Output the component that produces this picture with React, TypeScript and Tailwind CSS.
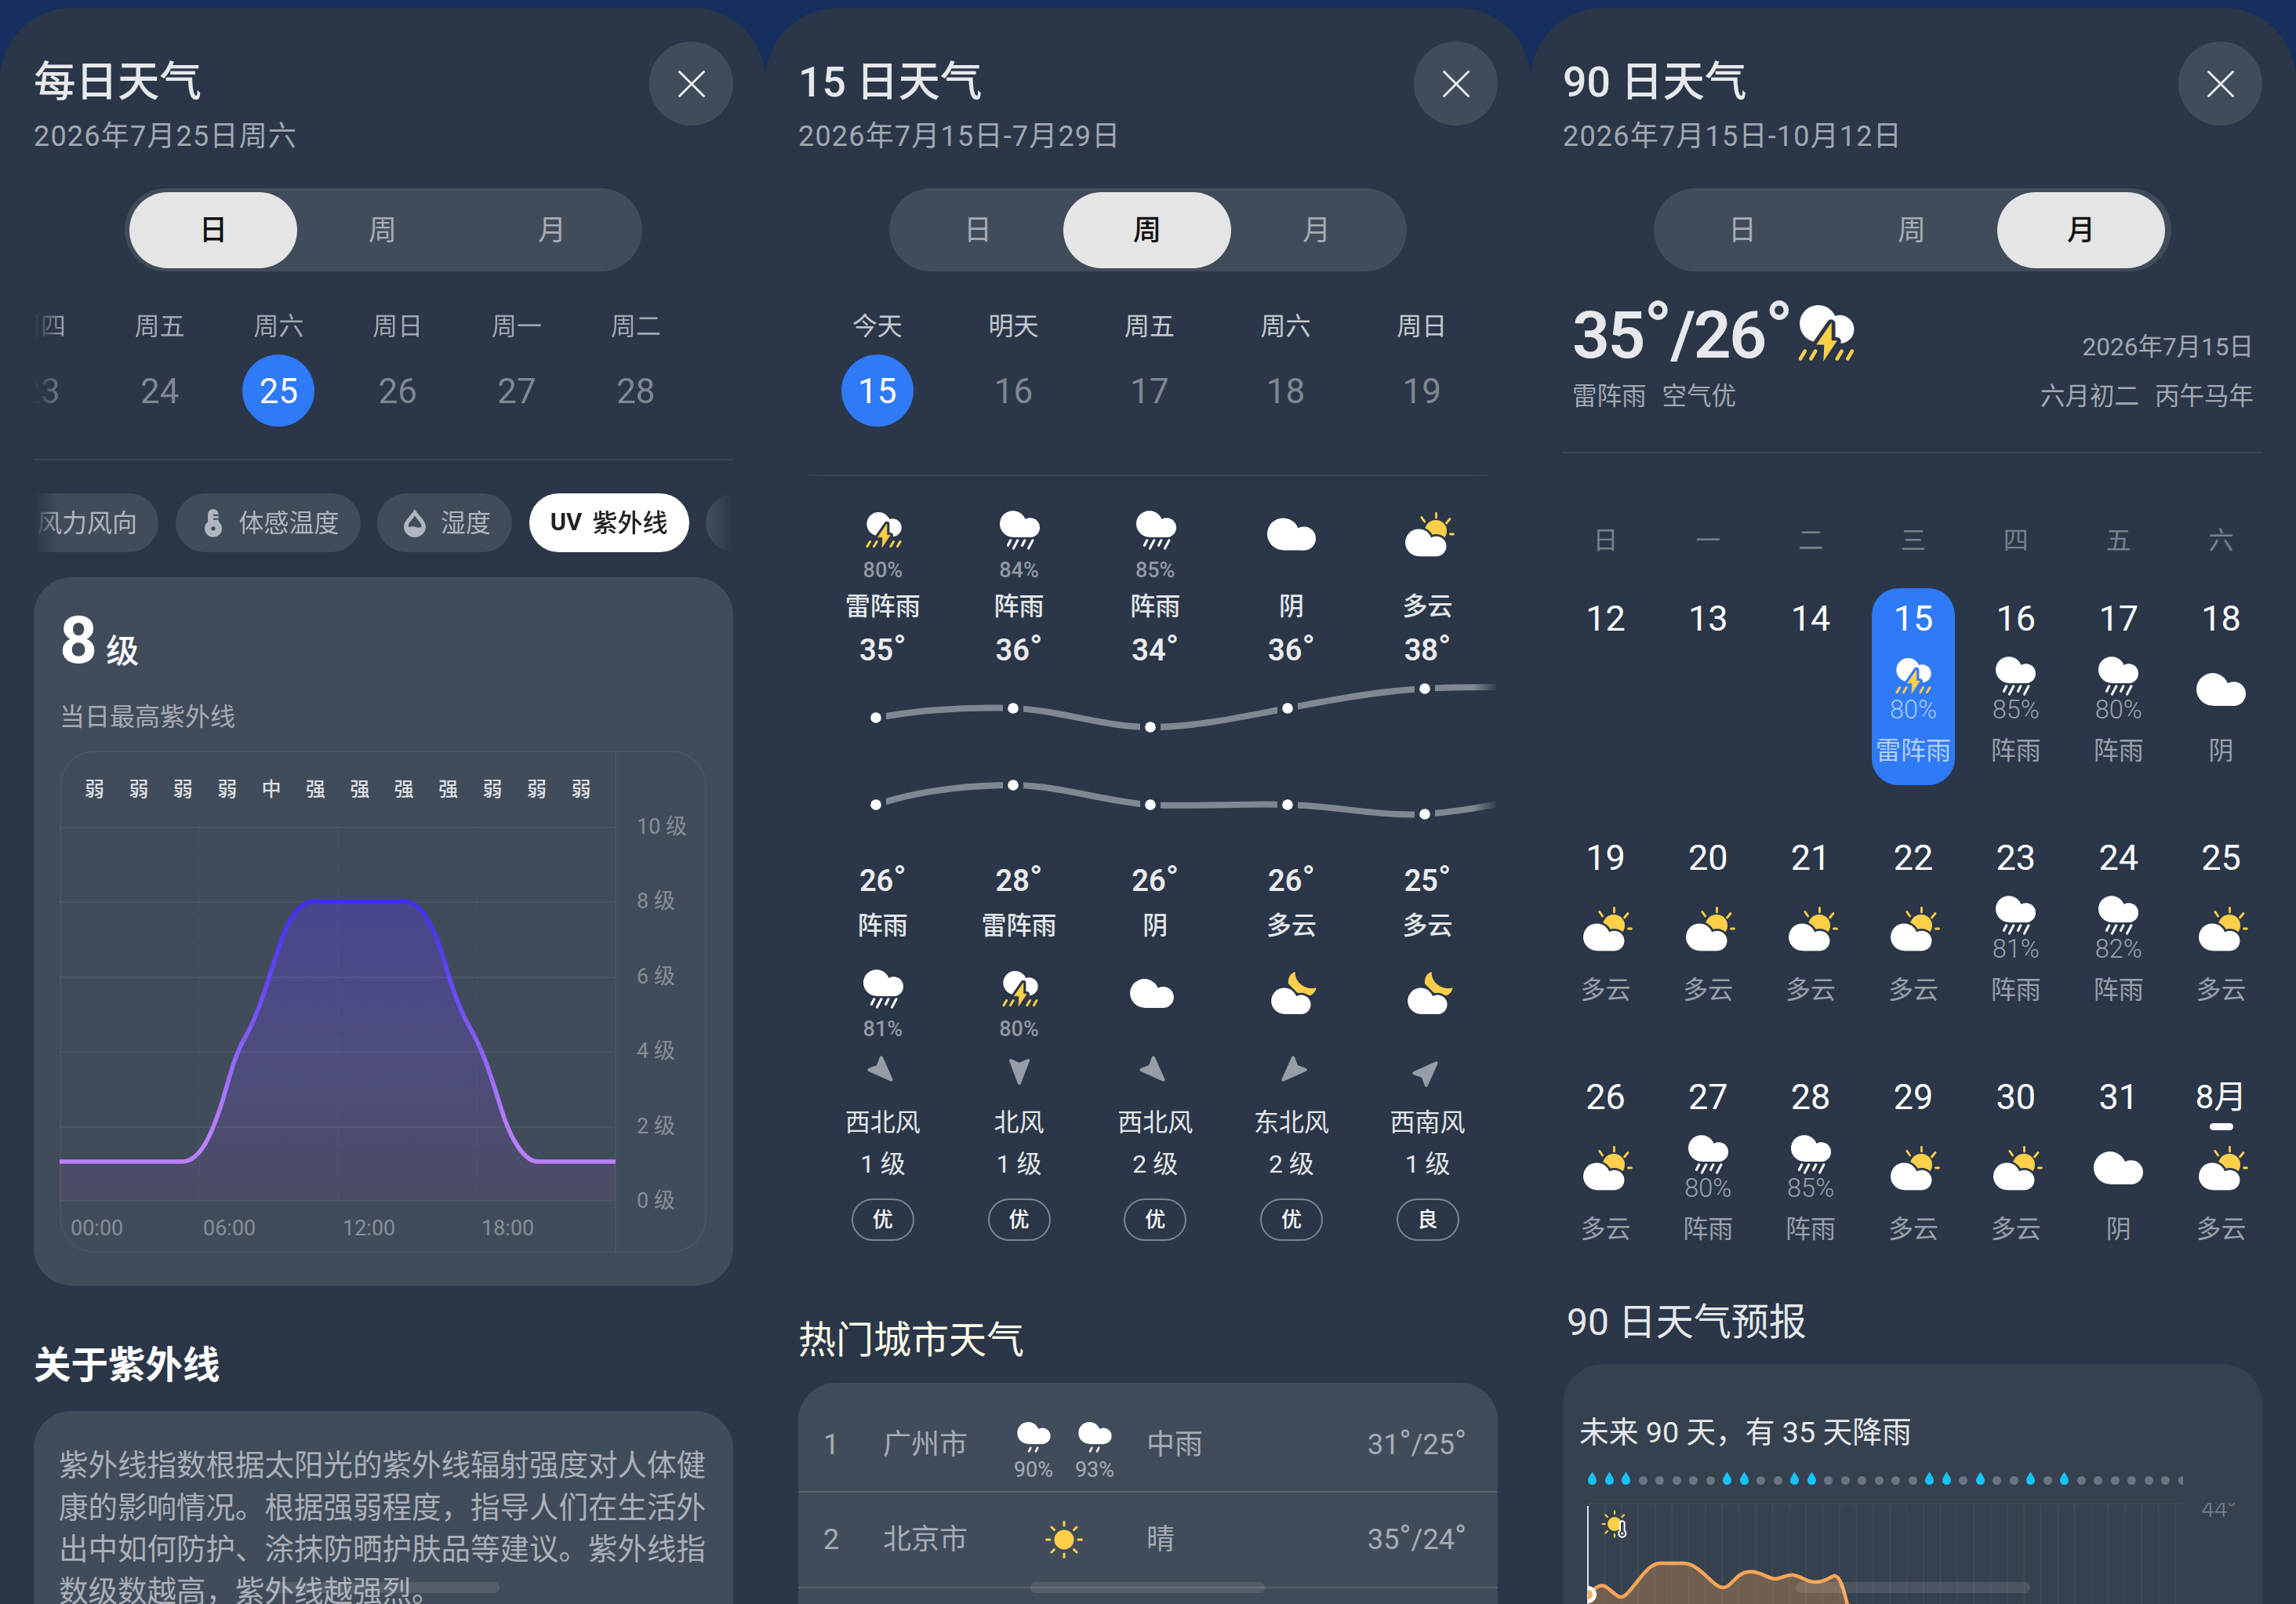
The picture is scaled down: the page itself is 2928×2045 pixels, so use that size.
import clsx from "clsx";
import type { ReactNode } from "react";

type Weather = "thunder" | "rain" | "drizzle" | "cloud" | "partly" | "night" | "sun";

const YELLOW = "#ffcf4a";

const CLOUD = (
  <>
    <circle cx="50" cy="50" r="50" />
    <circle cx="115" cy="64" r="37" />
    <path d="M50 50H115V101H50Z" />
  </>
);

function RainIcon({ className }: { className?: string }) {
  return (
    <svg className={className} viewBox="0 0 152 148" fill="#fff">
      {CLOUD}
      <path
        d="M41 112L31 132M68 112L52 143M95 112L85 132M125 112L109 143"
        stroke="#fff"
        strokeWidth="9"
        strokeLinecap="round"
      />
    </svg>
  );
}

function DrizzleIcon({ className }: { className?: string }) {
  return (
    <svg className={className} viewBox="0 0 152 140" fill="#fff">
      {CLOUD}
      <path d="M61 118L53 134M93 118L85 134" stroke="#fff" strokeWidth="9" strokeLinecap="round" />
    </svg>
  );
}

// currentColor is the surface behind the icon, it cuts the bolt out of the cloud
function ThunderIcon({ className }: { className?: string }) {
  return (
    <svg className={className} viewBox="0 0 140 140">
      <g fill="#fff">
        <circle cx="50" cy="46" r="46" />
        <circle cx="104" cy="60" r="35" />
        <path d="M50 60H104V95H60Z" />
      </g>
      <path
        d="M82 46L46 98L64 100V150L96 90H82Z"
        fill="currentColor"
        stroke="currentColor"
        strokeWidth="21"
        strokeLinejoin="round"
      />
      <path d="M82 46L47 97H66L64 136L95 89H82Z" fill={YELLOW} stroke={YELLOW} strokeWidth="2" />
      <path
        d="M17 114L6 133M43 114L32 133M108 114L97 133M134 114L123 133"
        stroke={YELLOW}
        strokeWidth="9"
        strokeLinecap="round"
      />
    </svg>
  );
}

function CloudIcon({ className }: { className?: string }) {
  return (
    <svg className={className} viewBox="0 0 152 101" fill="#fff">
      {CLOUD}
    </svg>
  );
}

function PartlyIcon({ className }: { className?: string }) {
  return (
    <svg className={className} viewBox="0 0 63 57">
      <circle cx="39" cy="24" r="14" fill={YELLOW} />
      <path
        d="M39.5 1.5V7M20.8 6.5L24.6 12M57 8.5L52.5 14M57.5 28H61.5"
        stroke={YELLOW}
        strokeWidth="2.8"
        strokeLinecap="round"
      />
      <g transform="translate(0 21.5) scale(.345)">
        <g fill="currentColor" stroke="currentColor" strokeWidth="16">
          {CLOUD}
        </g>
        <g fill="#fff">{CLOUD}</g>
      </g>
    </svg>
  );
}

function NightIcon({ className }: { className?: string }) {
  return (
    <svg className={className} viewBox="0 0 174 163">
      <path
        d="M92 0C72 6 64 24 66 46L100 80L150 91C162 86 172 74 173 61C150 68 124 60 107 42C95 28 91 14 92 0Z"
        fill={YELLOW}
      />
      <g transform="translate(0 62)">
        <g fill="currentColor" stroke="currentColor" strokeWidth="16">
          {CLOUD}
        </g>
        <g fill="#fff">{CLOUD}</g>
      </g>
    </svg>
  );
}

function SunIcon({ className }: { className?: string }) {
  return (
    <svg className={className} viewBox="0 0 48 48">
      <circle cx="24" cy="24" r="12.5" fill={YELLOW} />
      <path
        d="M24 1.5V6M24 42V46.5M1.5 24H6M42 24H46.5M8 8L11.5 11.5M36.5 36.5L40 40M40 8L36.5 11.5M11.5 36.5L8 40"
        stroke={YELLOW}
        strokeWidth="3"
        strokeLinecap="round"
      />
    </svg>
  );
}

function WeatherIcon({ type, className }: { type: Weather; className?: string }) {
  if (type === "thunder") return <ThunderIcon className={clsx("h-[46px] w-[46px]", className)} />;
  if (type === "rain") return <RainIcon className={clsx("h-[50px] w-[51px]", className)} />;
  if (type === "drizzle") return <DrizzleIcon className={clsx("h-[39px] w-[43px]", className)} />;
  if (type === "partly") return <PartlyIcon className={clsx("h-[57px] w-[63px]", className)} />;
  if (type === "night") return <NightIcon className={clsx("h-[54px] w-[58px]", className)} />;
  if (type === "sun") return <SunIcon className={clsx("h-12 w-12", className)} />;
  return <CloudIcon className={className ?? "h-[42px] w-[63px]"} />;
}

function ThermometerIcon() {
  return (
    <svg className="h-[36px] w-[22px]" viewBox="0 0 66 107" fill="#b1b6be">
      <path d="M12 19A20 19 0 0 1 53 19V60H12Z" />
      <circle cx="33" cy="74" r="33" />
      <circle cx="33" cy="74" r="8" fill="#414c5b" />
      <path d="M33 23H60M33 38H60" stroke="#414c5b" strokeWidth="6" />
    </svg>
  );
}

function HumidityIcon() {
  return (
    <svg className="h-[36px] w-[28px]" viewBox="0 0 82 105">
      <path d="M41 0C50 20 82 42 82 66A41 39 0 0 1 0 66C0 42 32 20 41 0Z" fill="#b1b6be" />
      <path d="M41 24C48 38 66 50 66 66C56 73 48 68 41 66C34 64 26 64 17 67C15 50 34 38 41 24Z" fill="#414c5b" />
    </svg>
  );
}

function Degree() {
  return <span className="relative -top-[0.05em] text-[1.12em] leading-none">°</span>;
}

const TABS = ["日", "周", "月"];

function Panel({
  title,
  subtitle,
  active,
  className,
  children,
}: {
  title: string;
  subtitle: string;
  active: number;
  className: string;
  children: ReactNode;
}) {
  return (
    <section
      className={clsx(
        "relative flex h-[2035px] w-[976px] flex-col overflow-hidden rounded-t-[92px] bg-[#2b3748] text-[#2b3748]",
        className
      )}
    >
      <header className="flex h-[230px] shrink-0 items-start justify-between">
        <div className="pt-[60px]">
          <h1 className="h-[70px] text-[53.5px] leading-[70px] font-medium text-[#e6e8eb]">{title}</h1>
          <p className="mt-[9px] text-[36px] leading-[50px] tracking-[1.2px] text-[#a1a8b1]">{subtitle}</p>
        </div>
        <button className="mt-[43px] flex h-[107px] w-[107px] items-center justify-center rounded-full bg-[#414c5b]">
          <svg className="h-[34px] w-[34px]" viewBox="0 0 34 34">
            <path d="M1.500 1.500L32.500 32.500M32.500 1.500L1.500 32.500" stroke="#eceef0" strokeWidth="2.8" strokeLinecap="round" />
          </svg>
        </button>
      </header>

      <nav className="ml-[116px] flex h-[106px] w-[660px] shrink-0 items-center gap-[2px] rounded-full bg-[#414c5b] pl-[6px]">
        {TABS.map((tab, i) => (
          <button
            key={tab}
            className={clsx(
              "h-[97px] w-[214px] rounded-full pt-[2px] text-[36px]",
              i === active ? "bg-[#e5e5e5] font-medium text-[#111]" : "text-[#a6acb6]"
            )}
          >
            {tab}
          </button>
        ))}
      </nav>

      {children}

      <div className="absolute bottom-[14px] left-[338px] h-[14px] w-[299px] rounded-full bg-white/10" />
    </section>
  );
}

function DateCell({
  week,
  day,
  active,
  className,
  weekClassName,
}: {
  week: string;
  day: number;
  active?: boolean;
  className: string;
  weekClassName: string;
}) {
  return (
    <div className={clsx("flex shrink-0 flex-col items-center", className)}>
      <span className={clsx("text-[32px] leading-[40px]", weekClassName)}>{week}</span>
      <span
        className={clsx(
          "mt-4 flex h-[92px] w-[92px] items-center justify-center rounded-full pt-px text-[44px]",
          active ? "bg-[#2f7af7] text-white" : "text-[#7f8791]"
        )}
      >
        {day}
      </span>
    </div>
  );
}

/* ---------- 日 ---------- */

const WEEK_DATES = [
  { week: "周四", day: 23 },
  { week: "周五", day: 24 },
  { week: "周六", day: 25, active: true },
  { week: "周日", day: 26 },
  { week: "周一", day: 27 },
  { week: "周二", day: 28 },
];

const UV_LEVELS = ["弱", "弱", "弱", "弱", "中", "强", "强", "强", "强", "弱", "弱", "弱"];
const UV_CURVE =
  "M0 524H156C180 524 194 489 208 446C220 403 226 383 238 363C257 329 268 283 278 256C288 223 302 192 325 192H439C464 192 480 233 491 269C501 305 512 335 526 358C544 391 554 428 563 456C574 493 592 524 610 524H709";

function UvChart() {
  return (
    <svg className="mt-[23px] ml-[33px] h-[640px] w-[826px]" viewBox="0 0 826 640" fill="none">
      <defs>
        <linearGradient id="uv-line" gradientUnits="userSpaceOnUse" x1="0" y1="192" x2="0" y2="500">
          <stop offset="0" stopColor="#402ff0" />
          <stop offset=".45" stopColor="#7350f8" />
          <stop offset=".85" stopColor="#b078f8" />
          <stop offset="1" stopColor="#bb80f8" />
        </linearGradient>
        <linearGradient id="uv-fill" gradientUnits="userSpaceOnUse" x1="0" y1="192" x2="0" y2="574">
          <stop offset="0" stopColor="#4a468f" />
          <stop offset=".5" stopColor="#4d4c7e" />
          <stop offset="1" stopColor="#4b4d63" />
        </linearGradient>
      </defs>
      <path d={`${UV_CURVE}V574H0Z`} fill="url(#uv-fill)" />
      <g stroke="#fff" strokeOpacity=".05" strokeWidth="2">
        <rect x="1" y="1" width="823" height="638" rx="44" />
        <path d="M709 1V639M1 98H709M1 193H709M1 289H709M1 384H709M1 480H709M1 574H709" />
        <path d="M178 98V574M355 98V574M532 98V574" strokeDasharray="28 10" strokeOpacity=".025" />
      </g>
      <path d={UV_CURVE} stroke="url(#uv-line)" strokeWidth="5.5" />
      {UV_LEVELS.map((level, i) => (
        <text key={i} x={44.5 + i * 56.4} y="58" fontSize="25" fontWeight="500" textAnchor="middle" fill="#dcdfe3">
          {level}
        </text>
      ))}
      {[10, 8, 6, 4, 2, 0].map((n, i) => (
        <text key={n} x="736" y={106 + i * 95.4} fontSize="27" fill="#868e99">
          {n} 级
        </text>
      ))}
      <text x="14" y="618" fontSize="27" fill="#868e99">00:00</text>
      <text x="183" y="618" fontSize="27" fill="#868e99">06:00</text>
      <text x="361" y="618" fontSize="27" fill="#868e99">12:00</text>
      <text x="538" y="618" fontSize="27" fill="#868e99">18:00</text>
    </svg>
  );
}

function Chip({ icon, children }: { icon?: ReactNode; children?: ReactNode }) {
  return (
    <div className="flex h-[75px] shrink-0 items-center gap-[17px] rounded-full bg-[#414c5b] pr-[27px] pl-8 text-[32px] text-[#b1b6be]">
      <span className="flex w-8 justify-center">{icon}</span>
      {children}
    </div>
  );
}

function DayPanel() {
  return (
    <Panel title="每日天气" subtitle="2026年7月25日周六" active={0} className="pr-[41px] pl-[43px]">
      <div className="mt-[50px] flex shrink-0 overflow-hidden [mask-image:linear-gradient(90deg,transparent,black_40px)]">
        <div className="-ml-[67px] flex">
          {WEEK_DATES.map((d) => (
            <DateCell key={d.day} {...d} className="w-[151.8px]" weekClassName="text-[#a1a8b1]" />
          ))}
        </div>
      </div>
      <div className="mt-[41px] h-[2px] shrink-0 bg-[#374453]" />

      <div className="mt-[42px] shrink-0 overflow-hidden [mask-image:linear-gradient(90deg,transparent,black_32px,black_862px,transparent)]">
        <div className="-ml-[77px] flex gap-[21.5px]">
          <Chip>风力风向</Chip>
          <Chip icon={<ThermometerIcon />}>体感温度</Chip>
          <Chip icon={<HumidityIcon />}>湿度</Chip>
          <div className="flex h-[75px] w-[204px] shrink-0 items-center justify-center gap-[13px] rounded-full bg-white text-[32px] font-medium whitespace-nowrap text-[#222]">
            <span className="text-[31px] font-bold">UV</span>
            紫外线
          </div>
          <Chip icon={<span className="h-6 w-6 rounded-full border-4 border-[#b1b6be]" />} />
        </div>
      </div>

      <div className="mt-8 h-[903px] shrink-0 rounded-[48px] bg-[#414c5b] pt-[30px]">
        <div className="flex h-[102px] items-center gap-[11px] pl-[33px] text-white">
          <span className="text-[84px] leading-[102px] font-bold">8</span>
          <span className="pt-[27px] text-[42px] leading-[60px] font-medium">级</span>
        </div>
        <p className="mt-[26px] pl-[33px] text-[32px] leading-[40px] text-[#a6acb4]">当日最高紫外线</p>
        <UvChart />
      </div>

      <h2 className="mt-[67px] shrink-0 text-[47.5px] leading-[70px] font-bold text-white">关于紫外线</h2>
      <div className="mt-[23px] shrink-0 rounded-[48px] bg-[#414c5b] px-[32px] pt-[43px] pb-20 text-[37.5px] leading-[53.6px] whitespace-nowrap text-[#aab0b8]">
        <p>紫外线指数根据太阳光的紫外线辐射强度对人体健</p>
        <p>康的影响情况。根据强弱程度，指导人们在生活外</p>
        <p>出中如何防护、涂抹防晒护肤品等建议。紫外线指</p>
        <p>数级数越高，紫外线越强烈。</p>
      </div>
    </Panel>
  );
}

/* ---------- 周 ---------- */

const FIVE_DATES = [
  { week: "今天", day: 15, active: true },
  { week: "明天", day: 16 },
  { week: "周五", day: 17 },
  { week: "周六", day: 18 },
  { week: "周日", day: 19 },
];

type HalfDay = { icon: Weather; percent?: number; text: string; temp: number };

const DAYTIME: HalfDay[] = [
  { icon: "thunder", percent: 80, text: "雷阵雨", temp: 35 },
  { icon: "rain", percent: 84, text: "阵雨", temp: 36 },
  { icon: "rain", percent: 85, text: "阵雨", temp: 34 },
  { icon: "cloud", text: "阴", temp: 36 },
  { icon: "partly", text: "多云", temp: 38 },
];

const NIGHT: (HalfDay & { wind: string; level: number; air: string; rotate: string })[] = [
  { icon: "rain", percent: 81, text: "阵雨", temp: 26, wind: "西北风", level: 1, air: "优", rotate: "-rotate-45" },
  { icon: "thunder", percent: 80, text: "雷阵雨", temp: 28, wind: "北风", level: 1, air: "优", rotate: "rotate-0" },
  { icon: "cloud", text: "阴", temp: 26, wind: "西北风", level: 2, air: "优", rotate: "-rotate-45" },
  { icon: "night", text: "多云", temp: 26, wind: "东北风", level: 2, air: "优", rotate: "rotate-45" },
  { icon: "night", text: "多云", temp: 25, wind: "西南风", level: 1, air: "良", rotate: "rotate-[225deg]" },
];

const DOT_X = [99, 274, 449, 624, 799];
const HIGH_Y = [61, 49, 73, 49, 24];
const LOW_Y = [172, 147, 172, 172, 184];

function TemperatureChart() {
  return (
    <svg className="h-[244px] w-[892px] shrink-0" viewBox="0 0 892 244" fill="none">
      <defs>
        <linearGradient id="temp-line" gradientUnits="userSpaceOnUse" x1="0" y1="0" x2="892" y2="0">
          <stop offset=".965" stopColor="#7f8892" />
          <stop offset="1" stopColor="#7f8892" stopOpacity="0" />
        </linearGradient>
      </defs>
      <g stroke="url(#temp-line)" strokeWidth="8">
        <path d="M99 61C157 51 215 47 274 49C332 51 390 73 449 73C507 73 565 60 624 49C682 38 740 27 799 24C830 22 860 22 892 22" />
        <path d="M99 172C157 153 215 147 274 147C332 147 390 168 449 172C507 175 565 170 624 172C682 173 740 187 799 184C830 182 862 177 892 171" />
      </g>
      {[HIGH_Y, LOW_Y].map((ys) =>
        ys.map((y, i) => (
          <g key={`${DOT_X[i]}-${y}`}>
            <rect x={DOT_X[i] - 13} y={y - 9} width="26" height="18" fill="#2b3748" />
            <circle cx={DOT_X[i]} cy={y} r="6.8" fill="#fff" />
          </g>
        ))
      )}
    </svg>
  );
}

function HalfDayIcon({ icon, percent, small }: { icon: Weather; percent?: number; small?: boolean }) {
  return (
    <>
      <div className={clsx("flex h-16 items-center justify-center", percent ? "pb-[2px]" : "pt-[8px]")}>
        {icon === "cloud" ? (
          <CloudIcon className={small ? "mr-2 h-[37px] w-[56px]" : "h-[42px] w-[62px]"} />
        ) : (
          <WeatherIcon type={icon} className={percent ? "ml-0.5" : "ml-1.5"} />
        )}
      </div>
      <span className="h-[34px] pt-px text-[27px] leading-[34px] font-medium text-[#9299a4]">
        {percent && `${percent}%`}
      </span>
    </>
  );
}

function WeekPanel() {
  return (
    <Panel title="15 日天气" subtitle="2026年7月15日-7月29日" active={1} className="px-[42px]">
      <div className="mt-[50px] ml-[14px] flex shrink-0">
        {FIVE_DATES.map((d) => (
          <DateCell key={d.day} {...d} className="w-[173.6px]" weekClassName="text-[#c5c9cf]" />
        ))}
      </div>
      <div className="mt-[61px] h-[2px] shrink-0 [background-image:linear-gradient(90deg,transparent,#3a4656_4%,#3a4656_96%,transparent)]" />

      <div className="mt-[38px] ml-[21px] flex shrink-0">
        {DAYTIME.map((d, i) => (
          <div key={i} className="flex w-[173.7px] shrink-0 flex-col items-center">
            <HalfDayIcon icon={d.icon} percent={d.percent} />
            <span className="mt-[8px] text-[32px] leading-[44px] font-medium text-[#e4e7eb]">{d.text}</span>
            <span className="mt-[9px] h-[50px] text-[38px] leading-[50px] font-semibold text-[#e9ebee]">
              {d.temp}
              <Degree />
            </span>
          </div>
        ))}
      </div>

      <TemperatureChart />

      <div className="ml-[21px] flex shrink-0">
        {NIGHT.map((d, i) => (
          <div key={i} className="flex w-[173.7px] shrink-0 flex-col items-center">
            <span className="h-[50px] text-[38px] leading-[50px] font-semibold text-[#e9ebee]">
              {d.temp}
              <Degree />
            </span>
            <span className="mt-[10px] mb-[28px] text-[32px] leading-[44px] font-medium text-[#e4e7eb]">{d.text}</span>
            <HalfDayIcon icon={d.icon} percent={d.percent} small />
            <svg className={clsx("mt-[18px] h-10 w-10", d.rotate)} viewBox="0 0 40 40">
              <path
                d="M9 6L20 11L31 6L20 35Z"
                fill="#969da7"
                stroke="#969da7"
                strokeWidth="4"
                strokeLinejoin="round"
              />
            </svg>
            <span className="mt-[23px] text-[32px] leading-[44px] text-[#e4e7eb]">{d.wind}</span>
            <span className="mt-[11px] text-[32px] leading-[40px] text-[#e4e7eb]">{d.level} 级</span>
            <span className="mt-[24px] flex h-[54px] w-20 items-center justify-center rounded-full border-2 border-[#7c8591] text-[26px] font-medium text-white">
              {d.air}
            </span>
          </div>
        ))}
      </div>

      <h2 className="mt-[92px] shrink-0 text-[48px] leading-[70px] text-[#fffee9]">热门城市天气</h2>
      <div className="mt-[19px] h-[340px] shrink-0 rounded-t-[48px] bg-[#414c5b] text-[36px] text-[#a6acb5]">
        <div className="flex h-[140px] items-center border-b-2 border-[#56606d] pt-[20px]">
          <span className="w-[84px] text-center">1</span>
          <span className="w-[170px] pl-6">广州市</span>
          <div className="mt-4 flex w-[170px] justify-center">
            {[90, 93].map((p) => (
              <div key={p} className="flex w-[78px] flex-col items-center gap-2">
                <WeatherIcon type="drizzle" />
                <span className="text-[27px] leading-[28px]">{p}%</span>
              </div>
            ))}
          </div>
          <span className="pl-[20px]">中雨</span>
          <span className="ml-auto pr-[40px]">
            31
            <Degree />
            /25
            <Degree />
          </span>
        </div>
        <div className="flex h-[122px] items-center border-b-2 border-[#56606d]">
          <span className="w-[84px] text-center">2</span>
          <span className="w-[170px] pl-6">北京市</span>
          <div className="flex w-[170px] justify-center">
            <WeatherIcon type="sun" />
          </div>
          <span className="pl-[20px]">晴</span>
          <span className="ml-auto pr-[40px]">
            35
            <Degree />
            /24
            <Degree />
          </span>
        </div>
      </div>
    </Panel>
  );
}

/* ---------- 月 ---------- */

type CalendarDay = { day: string; icon?: Weather; percent?: number; text?: string; active?: boolean; dash?: boolean };

const CALENDAR: CalendarDay[] = [
  { day: "12" },
  { day: "13" },
  { day: "14" },
  { day: "15", icon: "thunder", percent: 80, text: "雷阵雨", active: true },
  { day: "16", icon: "rain", percent: 85, text: "阵雨" },
  { day: "17", icon: "rain", percent: 80, text: "阵雨" },
  { day: "18", icon: "cloud", text: "阴" },
  { day: "19", icon: "partly", text: "多云" },
  { day: "20", icon: "partly", text: "多云" },
  { day: "21", icon: "partly", text: "多云" },
  { day: "22", icon: "partly", text: "多云" },
  { day: "23", icon: "rain", percent: 81, text: "阵雨" },
  { day: "24", icon: "rain", percent: 82, text: "阵雨" },
  { day: "25", icon: "partly", text: "多云" },
  { day: "26", icon: "partly", text: "多云" },
  { day: "27", icon: "rain", percent: 80, text: "阵雨" },
  { day: "28", icon: "rain", percent: 85, text: "阵雨" },
  { day: "29", icon: "partly", text: "多云" },
  { day: "30", icon: "partly", text: "多云" },
  { day: "31", icon: "cloud", text: "阴" },
  { day: "8月", icon: "partly", text: "多云", dash: true },
];

const RAIN_DAYS = [0, 1, 2, 8, 9, 12, 13, 20, 21, 23, 26, 28];

function CalendarCell({ day, icon, percent, text, active, dash }: CalendarDay) {
  return (
    <div
      className={clsx(
        "mx-auto flex h-[251px] w-[106px] flex-col items-center rounded-[34px] pt-[14px] whitespace-nowrap",
        active ? "bg-[#2f7af7] text-[#2f7af7]" : "text-[#2b3748]"
      )}
    >
      <span className={clsx("leading-[50px] text-white", dash ? "text-[42px]" : "text-[45px]")}>{day}</span>
      <div className="h-[22px] pt-[8px]">{dash && <div className="h-[9px] w-[30px] rounded-full bg-white" />}</div>
      <div className={clsx("flex h-[52px] items-center", !percent && "translate-y-[17px]")}>
        {icon && <WeatherIcon type={icon} className={icon === "partly" ? "ml-1.5" : undefined} />}
      </div>
      <span
        className={clsx(
          "h-[34px] text-[32.5px] leading-[34px] font-light",
          active ? "text-[#a9c9fb]" : "text-[#9ca3ad]"
        )}
      >
        {percent && `${percent}%`}
      </span>
      <span className={clsx("mt-[15px] text-[32px] leading-[40px]", active ? "text-[#b4d0fc]" : "text-[#99a0aa]")}>
        {text}
      </span>
    </div>
  );
}

const TREND =
  "M32 120C40 108 47 104 53 106C62 110 70 124 78 119C90 112 106 77 124 77H153C176 77 190 108 205 108C214 108 222 89 236 88C252 86 262 98 272 97C280 96 284 92 292 92C302 92 310 101 322 101C334 101 338 96 346 93C354 93 358 110 364 134";

function TrendChart() {
  return (
    <svg className="mt-[20px] h-[129px] w-[892px]" viewBox="0 0 892 129" fill="none">
      <path
        d={`M32 1H790${Array.from({ length: 35 }, (_, i) => `M${(53.4 + i * 21.4).toFixed(1)} 1V129`).join("")}`}
        stroke="#454a54"
        strokeWidth="1.6"
      />
      <path d={`${TREND}H32Z`} fill="#f8a553" fillOpacity=".3" />
      <path d={TREND} stroke="#faa656" strokeWidth="4.5" />
      <path d="M32 4V129" stroke="#dfe2e6" strokeWidth="2" />
      <path d="M32 106A11 11 0 0 1 32 128Z" fill="#fff" />
      <path d="M32 111A6 6 0 0 1 32 123Z" fill="#f3b35e" />
      <g transform="translate(49 9)">
        <circle cx="17" cy="18" r="9" fill={YELLOW} />
        <path
          d="M17 1.5V5M17 31V34.5M1.5 18H5M5.5 6.5L8 9M29 6.5L26.5 9M8 27L5.5 29.5"
          stroke={YELLOW}
          strokeWidth="2.2"
          strokeLinecap="round"
        />
        <path
          d="M24 17A2.8 2.8 0 0 1 29.6 17V26.5A4.6 4.6 0 1 1 24 26.5Z"
          fill="#364150"
          stroke="#fff"
          strokeWidth="2"
        />
        <circle cx="26.8" cy="30" r="1.6" fill="#fff" />
      </g>
      <text x="814" y="18" fontSize="30" fontWeight="300" fill="#7b838e">
        44°
      </text>
    </svg>
  );
}

function MonthPanel() {
  return (
    <Panel title="90 日天气" subtitle="2026年7月15日-10月12日" active={2} className="pr-[43px] pl-[41px]">
      <div className="mt-[34px] flex h-[146px] shrink-0 justify-between pr-[11px] pl-[12px] text-[31.5px] text-[#a1a8b1]">
        <div>
          <div className="flex h-[90px] items-center gap-[8px] text-[#2b3748]">
            <span className="text-[84px] leading-[90px] font-semibold tracking-[-2.4px] text-[#e6e8eb]">
              35
              <Degree />
              /26
              <Degree />
            </span>
            <ThunderIcon className="h-[72px] w-[72px]" />
          </div>
          <p className="mt-4 flex gap-5 leading-[40px]">
            <span>雷阵雨</span>
            <span>空气优</span>
          </p>
        </div>
        <div className="flex flex-col items-end pt-[43px]">
          <p className="leading-[40px]">2026年7月15日</p>
          <p className="mt-[23px] flex gap-5 leading-[40px]">
            <span>六月初二</span>
            <span>丙午马年</span>
          </p>
        </div>
      </div>
      <div className="mt-[50px] h-[2px] shrink-0 bg-[#3a4655]" />

      <div className="-ml-[11px] mt-[91px] grid w-[916px] shrink-0 grid-cols-7 text-center text-[32px] leading-[40px] text-[#77808b]">
        {["日", "一", "二", "三", "四", "五", "六"].map((w) => (
          <span key={w}>{w}</span>
        ))}
      </div>
      <div className="-ml-[11px] mt-[41px] grid w-[916px] shrink-0 grid-cols-7 gap-y-[54px]">
        {CALENDAR.map((d) => (
          <CalendarCell key={d.day} {...d} />
        ))}
      </div>

      <h2 className="mt-[40px] shrink-0 pl-[5px] text-[48px] leading-[70px] text-[#e6e8eb]">90 日天气预报</h2>
      <div className="mt-[18px] shrink-0 rounded-t-[52px] bg-[#364150] pt-[62px]">
        <p className="pl-[21px] text-[37.7px] leading-[50px] text-[#e6e8eb]">未来 90 天，有 35 天降雨</p>
        <div className="mt-[25px] ml-[32px] flex h-5 w-[759px] items-center gap-[10.5px] overflow-hidden">
          {Array.from({ length: 36 }, (_, i) =>
            RAIN_DAYS.includes(i) ? (
              <svg key={i} className="mb-[3px] h-[17px] w-[11px] shrink-0" viewBox="0 0 11 17">
                <path d="M5.5 0C7 4 11 7.500 11 11.500A5.500 5.500 0 0 1 0 11.500C0 7.500 4 4 5.500 0Z" fill="#15c3fb" />
              </svg>
            ) : (
              <span key={i} className="mt-[2px] h-[11px] w-[11px] shrink-0 rounded-full bg-[#6c7480]" />
            )
          )}
        </div>
        <TrendChart />
      </div>
    </Panel>
  );
}

export default function App() {
  return (
    <main className="flex h-[2045px] w-[2928px] overflow-hidden bg-[#15305f] pt-[10px] font-[Roboto,'Noto_Sans_CJK_SC',sans-serif]">
      <DayPanel />
      <WeekPanel />
      <MonthPanel />
    </main>
  );
}
